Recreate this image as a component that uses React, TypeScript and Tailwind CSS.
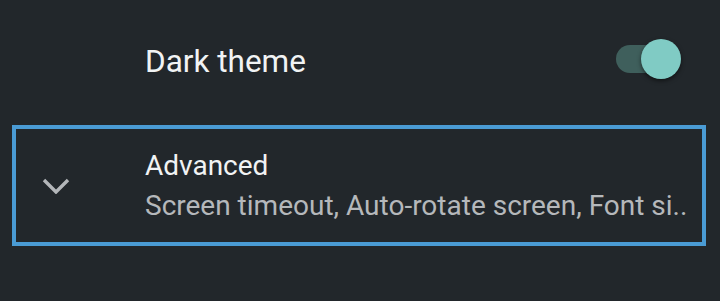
function Toggle() {
  return (
    <div className="relative w-[65px] h-[40px] flex items-center">
      <div className="w-[60px] h-[28px] rounded-full bg-[#3f5f5c]" />
      <div className="absolute right-0 top-0 w-[40px] h-[40px] rounded-full bg-[#80cbc4] shadow-[0_2px_4px_rgba(0,0,0,0.5)]" />
    </div>
  );
}

function Chevron() {
  return (
    <svg width="28" height="16" viewBox="0 0 28 16" fill="none">
      <polyline
        points="2,2 14,14 26,2"
        stroke="#b3b6b9"
        strokeWidth="3.4"
        strokeLinecap="butt"
        strokeLinejoin="miter"
      />
    </svg>
  );
}

export default function App() {
  return (
    <div
      className="w-[720px] h-[301px] bg-[#22272b] pt-[39px]"
      style={{ fontFamily: "Roboto, 'Liberation Sans', sans-serif" }}
    >
      <div className="flex items-start justify-between h-[40px] pl-[145px] pr-[39px]">
        <span className="text-[31.5px] leading-[40px] mt-[3px] text-[#f1f3f4]">Dark theme</span>
        <Toggle />
      </div>
      <div className="mt-[46px] mx-[12px] w-[694px] h-[121px] border-[4px] border-[#4a9bd4] flex items-center">
        <div className="w-[129px] pl-[26px] flex items-center">
          <Chevron />
        </div>
        <div className="flex flex-col">
          <span className="text-[28px] leading-[40px] text-[#f1f3f4]">Advanced</span>
          <span className="text-[28px] leading-[40px] text-[#b5b8bb]">
            Screen timeout, Auto-rotate screen, Font si..
          </span>
        </div>
      </div>
    </div>
  );
}
